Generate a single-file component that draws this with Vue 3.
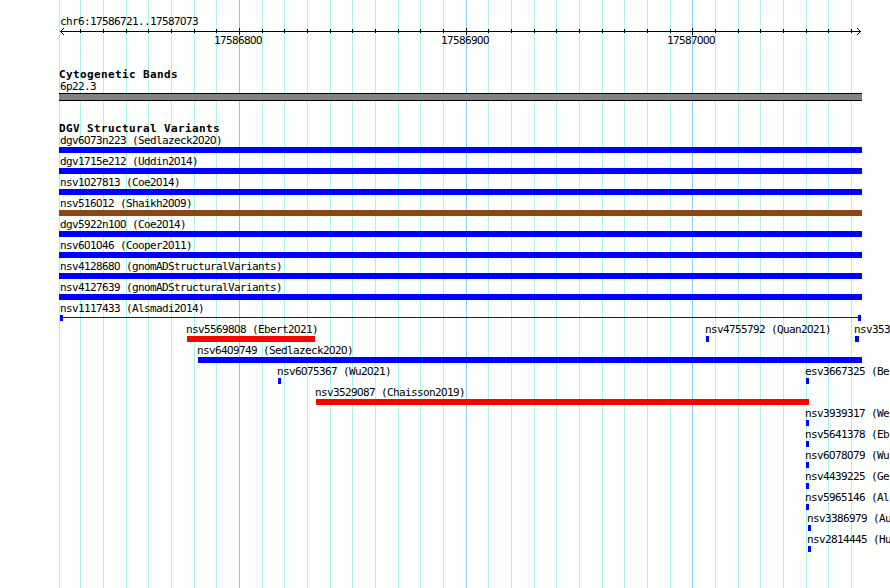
<template>
  <div class="browser">
    <!-- Grid lines behind every track -->
    <svg class="browser__grid" width="890" height="588" shape-rendering="crispEdges">
      <rect
        v-for="x in gridLines"
        :key="x"
        :x="x"
        y="0"
        width="1"
        height="588"
        :fill="isMajor(x) ? '#84cef4' : '#acf2ec'"
      />
    </svg>

    <header class="ruler">
      <div class="ruler__region">
        <span v-for="(part, i) in split(region)" :key="i" :class="{ zero: part[0] === '0' }">{{ part }}</span>
      </div>
      <svg class="ruler__axis" width="890" height="7" shape-rendering="crispEdges">
        <rect x="60" y="3" width="801" height="1" />
        <template v-for="x in gridLines.slice(1)" :key="x">
          <rect v-if="isMajor(x)" :x="x" y="0" width="1" height="7" />
          <rect v-else :x="x" y="1" width="1" height="4" />
        </template>
        <!-- Arrow heads -->
        <template v-for="i in 3" :key="i">
          <rect :x="60 + i" :y="3 - i" width="1" height="1" />
          <rect :x="60 + i" :y="3 + i" width="1" height="1" />
          <rect :x="860 - i" :y="3 - i" width="1" height="1" />
          <rect :x="860 - i" :y="3 + i" width="1" height="1" />
        </template>
      </svg>
      <div class="ruler__labels">
        <div v-for="m in majors" :key="m.x" class="ruler__label" :style="{ marginLeft: m.x - 25 + 'px' }">
          <span v-for="(part, i) in split(m.text)" :key="i" :class="{ zero: part[0] === '0' }">{{ part }}</span>
        </div>
      </div>
    </header>

    <section class="bands">
      <h2 class="title">Cytogenetic Bands</h2>
      <div class="bands__name">6p22.3</div>
      <div class="bands__bar"></div>
    </section>

    <section class="variants">
      <h2 class="title title--tight">DGV Structural Variants</h2>
      <div v-for="(row, r) in rows" :key="r" class="row">
        <div
          v-for="f in row"
          :key="f.name"
          class="feature"
          :style="{ marginLeft: f.start + 'px' }"
        >
          <div class="feature__label" :style="{ marginLeft: labelOffset(f) + 'px' }">
            <span v-for="(part, i) in split(f.name)" :key="i" :class="{ zero: part[0] === '0' }">{{ part }}</span>
          </div>
          <div
            class="feature__bar"
            :class="`feature__bar--${f.type}`"
            :style="{ width: f.end - f.start + 'px' }"
          ></div>
        </div>
      </div>
    </section>
  </div>
</template>

<script setup>
const region = 'chr6:17586721..17587073'

const gridLines = [
  59, 80, 103, 126, 148, 171, 194, 216, 239, 262, 284, 307, 330, 352, 375, 398, 420, 443,
  466, 488, 511, 534, 556, 579, 602, 624, 647, 670, 692, 715, 738, 760, 783, 806, 828, 851
]

const majors = [
  { x: 239, text: '17586800' },
  { x: 466, text: '17586900' },
  { x: 692, text: '17587000' }
]

const isMajor = (x) => majors.some((m) => m.x === x)

// Zeros are set in a face without the inner dot
const split = (text) => text.split(/(0+)/).filter(Boolean)

// Labels hang one pixel left of the bar, but never before x = 60
const labelOffset = (f) => Math.max(60, f.start - 1) - f.start

const feature = (name, start = 59, end = 862, type = 'gain') => ({ name, start, end, type })

const rows = [
  [feature('dgv6073n223 (Sedlazeck2020)')],
  [feature('dgv1715e212 (Uddin2014)')],
  [feature('nsv1027813 (Coe2014)')],
  [feature('nsv516012 (Shaikh2009)', 59, 862, 'complex')],
  [feature('dgv5922n100 (Coe2014)')],
  [feature('nsv601046 (Cooper2011)')],
  [feature('nsv4128680 (gnomADStructuralVariants)')],
  [feature('nsv4127639 (gnomADStructuralVariants)')],
  [feature('nsv1117433 (Alsmadi2014)', 60, 861, 'span')],
  [
    feature('nsv5569808 (Ebert2021)', 187, 315, 'loss'),
    feature('nsv4755792 (Quan2021)', 706, 709),
    feature('nsv353', 855, 859)
  ],
  [feature('nsv6409749 (Sedlazeck2020)', 198, 862)],
  [
    feature('nsv6075367 (Wu2021)', 278, 281),
    feature('esv3667325 (Be', 806, 809)
  ],
  [feature('nsv3529087 (Chaisson2019)', 316, 809, 'loss')],
  [feature('nsv3939317 (We', 806, 809)],
  [feature('nsv5641378 (Eb', 806, 809)],
  [feature('nsv6078079 (Wu', 806, 809)],
  [feature('nsv4439225 (Ge', 806, 809)],
  [feature('nsv5965146 (Al', 806, 809)],
  [feature('nsv3386979 (Au', 808, 811)],
  [feature('nsv2814445 (Hu', 808, 811)]
]
</script>

<style>
body {
  margin: 0;
  background: #fcfefc;
}
</style>

<style scoped>
.browser {
  position: relative;
  box-sizing: border-box;
  width: 890px;
  height: 588px;
  padding-top: 15px;
  overflow: hidden;
  background: #fcfefc;
  color: #000;
  font-family: "DejaVu Sans Mono", monospace;
  font-size: 11px;
  line-height: 13px;
  letter-spacing: -0.622px;
  white-space: pre;
}

.browser__grid {
  position: absolute;
  inset: 0;
}

.ruler,
.bands,
.variants {
  position: relative;
}

.zero {
  font-family: Roboto, sans-serif;
  font-size: 11.5px;
  line-height: 1;
  letter-spacing: -0.459px;
}

.ruler {
  height: 54px;
}

.ruler__region {
  height: 13px;
  margin-left: 60px;
}

.ruler__axis {
  display: block;
}

.ruler__labels {
  display: grid;
  margin-top: -1px;
}

.ruler__label {
  grid-area: 1 / 1;
}

.title {
  height: 12px;
  margin: 0 0 0 59px;
  font-size: 11px;
  font-weight: bold;
  line-height: 12px;
  letter-spacing: 0.378px;
}

.title--tight {
  margin-bottom: -1px;
}

.bands {
  height: 54px;
}

.bands__name {
  height: 12px;
  margin-left: 60px;
  line-height: 12px;
}

.bands__bar {
  width: 803px;
  height: 6px;
  margin-left: 59px;
  border-top: 1px solid #000;
  border-bottom: 1px solid #000;
  background: #848284;
}

.row {
  display: grid;
  grid-template-columns: 890px;
  height: 21px;
}

.feature {
  grid-area: 1 / 1;
}

.feature__label {
  height: 13px;
}

.feature__bar {
  height: 6px;
}

.feature__bar--gain {
  background: #00f;
}

.feature__bar--loss {
  background: #f00;
}

.feature__bar--complex {
  background: #8c4614;
}

/* Thin line with a block on each end */
.feature__bar--span {
  box-sizing: border-box;
  border: solid #00f;
  border-width: 0 3px;
  background: linear-gradient(#00f, #00f) 0 2px / 100% 1px no-repeat;
}
</style>
